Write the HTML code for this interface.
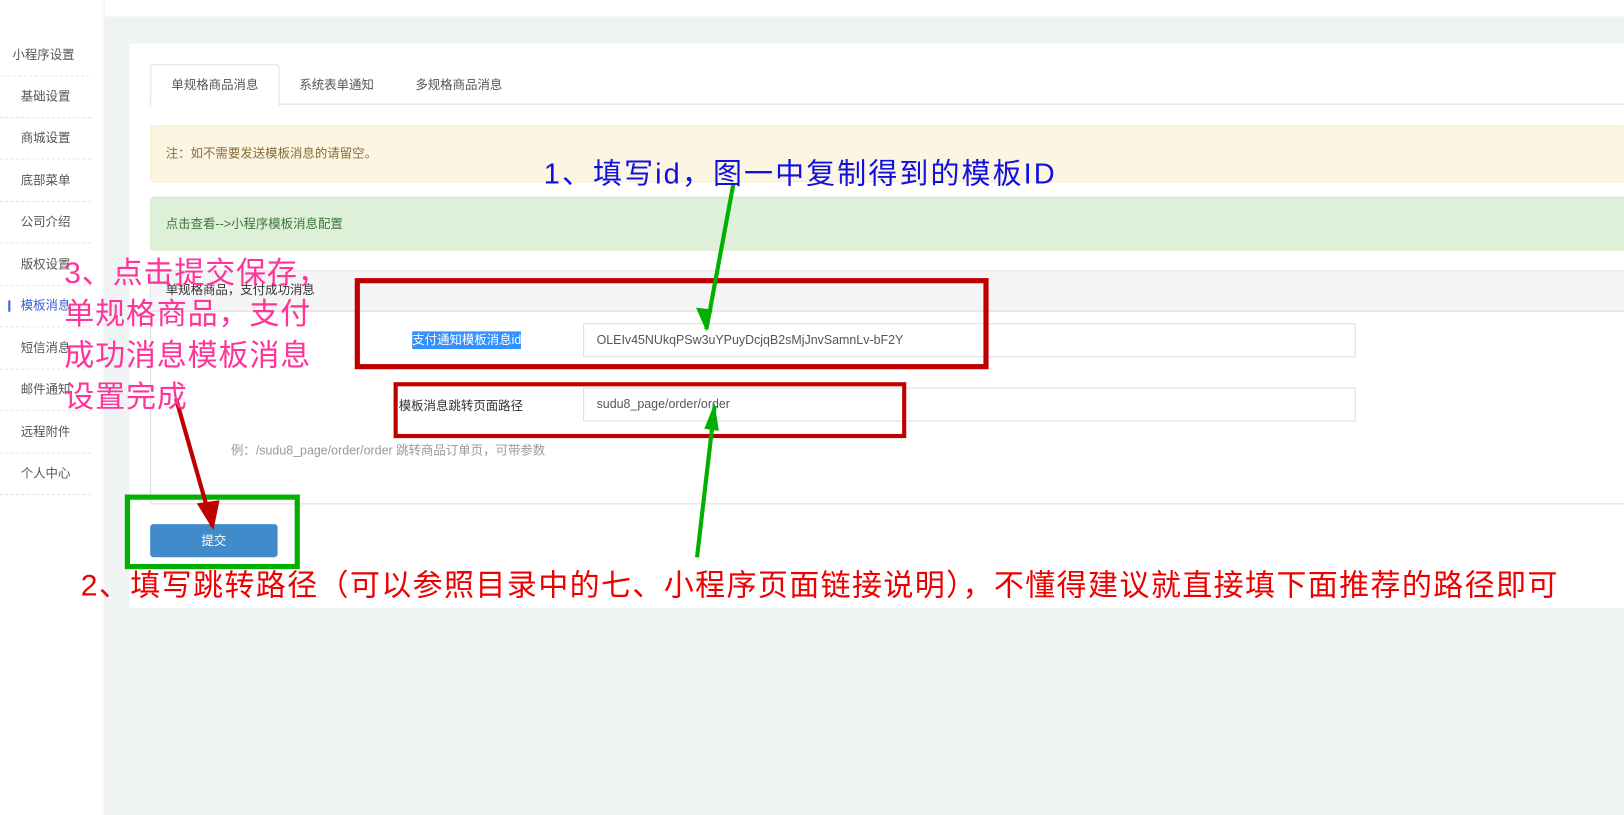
<!DOCTYPE html>
<html><head><meta charset="utf-8"><style>
html,body{margin:0;padding:0;width:1624px;height:815px;overflow:hidden;background:#fff}
#w{position:absolute;left:0;top:0;width:1568px;height:787px;transform:scale(1.03572);transform-origin:0 0;font-family:"Liberation Sans","Noto Sans CJK SC",sans-serif;font-size:12px;color:#333}
.a{position:absolute}
.side{left:0;top:0;width:100px;height:787px;background:#fff;border-right:1px solid #eee}
.si{position:absolute;left:0;width:88px;height:40px;border-bottom:1px dashed #e5e5e5;text-align:center;line-height:40px;color:#555;font-size:12px}
</style></head><body><div id="w">
<div class="a" style="left:100px;top:0;width:1468px;height:787px;background:#eff3f4"></div>
<div class="a" style="left:100px;top:0;width:1468px;height:16px;background:#fff"></div>
<div class="a side"></div>
<div class="si" style="top:33px;left:-2px">小程序设置</div>
<div class="si" style="top:73px">基础设置</div>
<div class="si" style="top:113px">商城设置</div>
<div class="si" style="top:154px">底部菜单</div>
<div class="si" style="top:194px">公司介绍</div>
<div class="si" style="top:235px">版权设置</div>
<div class="si" style="top:275px;color:#3c5fd6">模板消息</div>
<div class="a" style="left:8px;top:290px;width:2px;height:11px;background:#3c5fd6"></div>
<div class="si" style="top:316px">短信消息</div>
<div class="si" style="top:356px">邮件通知</div>
<div class="si" style="top:397px">远程附件</div>
<div class="si" style="top:437px">个人中心</div>

<div class="a" style="left:125px;top:42px;width:1443px;height:545px;background:#fff"></div>
<div class="a" style="left:145px;top:100px;width:1423px;height:1px;background:#ddd"></div>
<div class="a" style="left:145px;top:62px;width:123px;height:39px;background:#fff;border:1px solid #ddd;border-bottom:none;border-radius:3px 3px 0 0;text-align:center;line-height:39px;color:#555">单规格商品消息</div>
<div class="a" style="left:289px;top:73px;color:#555">系统表单通知</div>
<div class="a" style="left:401px;top:73px;color:#555">多规格商品消息</div>

<div class="a" style="left:145px;top:121px;width:1423px;height:53px;background:#fcf5e2;border:1px solid #faebcc;border-radius:3px;color:#8a6d3b;line-height:53px;text-indent:14px">注：如不需要发送模板消息的请留空。</div>
<div class="a" style="left:145px;top:190px;width:1423px;height:50px;background:#dff0d8;border:1px solid #d6e9c6;border-radius:3px;color:#3c763d;line-height:50px;text-indent:14px">点击查看--&gt;小程序模板消息配置</div>

<div class="a" style="left:145px;top:261px;width:1423px;height:224px;border:1px solid #ddd;border-right:none"></div>
<div class="a" style="left:146px;top:262px;width:1422px;height:38px;background:#f5f5f5;border-bottom:1px solid #ddd;line-height:36px;text-indent:14px;color:#333">单规格商品，支付成功消息</div>

<div class="a" style="left:398px;top:320px;background:#3390ff;color:#fff;line-height:17px">支付通知模板消息id</div>
<div class="a" style="left:563px;top:312px;width:744px;height:31px;border:1px solid #ddd;line-height:31px;text-indent:12px;color:#555">OLEIv45NUkqPSw3uYPuyDcjqB2sMjJnvSamnLv-bF2Y</div>
<div class="a" style="left:385px;top:383px;color:#333">模板消息跳转页面路径</div>
<div class="a" style="left:563px;top:374px;width:744px;height:31px;border:1px solid #ddd;line-height:31px;text-indent:12px;color:#555">sudu8_page/order/order</div>
<div class="a" style="left:223px;top:426px;color:#999">例：/sudu8_page/order/order 跳转商品订单页，可带参数</div>

<div class="a" style="left:145px;top:506px;width:123px;height:32px;background:#428bca;border-radius:3px;color:#fff;text-align:center;line-height:32px">提交</div>

<svg class="a" style="left:0;top:0" width="1568" height="787">
<rect x="345" y="271" width="607" height="83" fill="none" stroke="#bf0000" stroke-width="5"/>
<rect x="382" y="371" width="491" height="50" fill="none" stroke="#bf0000" stroke-width="4"/>
<rect x="123" y="480" width="164" height="67" fill="none" stroke="#00b000" stroke-width="5"/>
<line x1="708" y1="178" x2="682" y2="318" stroke="#00b000" stroke-width="4"/>
<polygon points="672,297 682,320 688,299" fill="#00b000"/>
<line x1="673" y1="538" x2="690" y2="392" stroke="#00b000" stroke-width="4"/>
<polygon points="680,414 690,389 694,416" fill="#00b000"/>
<line x1="170" y1="385" x2="205" y2="508" stroke="#bf0000" stroke-width="4"/>
<polygon points="190,486 206,512 212,483" fill="#bf0000"/>
</svg>

<div class="a" style="left:525px;top:146px;font-size:28px;letter-spacing:2px;color:#1010e0;white-space:nowrap">1、填写id，图一中复制得到的模板ID</div>
<div class="a" style="left:62px;top:244px;font-size:29px;letter-spacing:0.8px;line-height:40px;color:#ff3399;width:320px">3、点击提交保存，<br>单规格商品，支付<br>成功消息模板消息<br>设置完成</div>
<div class="a" style="left:78px;top:542px;font-size:29px;letter-spacing:1.3px;color:#ee0000;white-space:nowrap">2、填写跳转路径（可以参照目录中的七、小程序页面链接说明），不懂得建议就直接填下面推荐的路径即可</div>
</div></body></html>
